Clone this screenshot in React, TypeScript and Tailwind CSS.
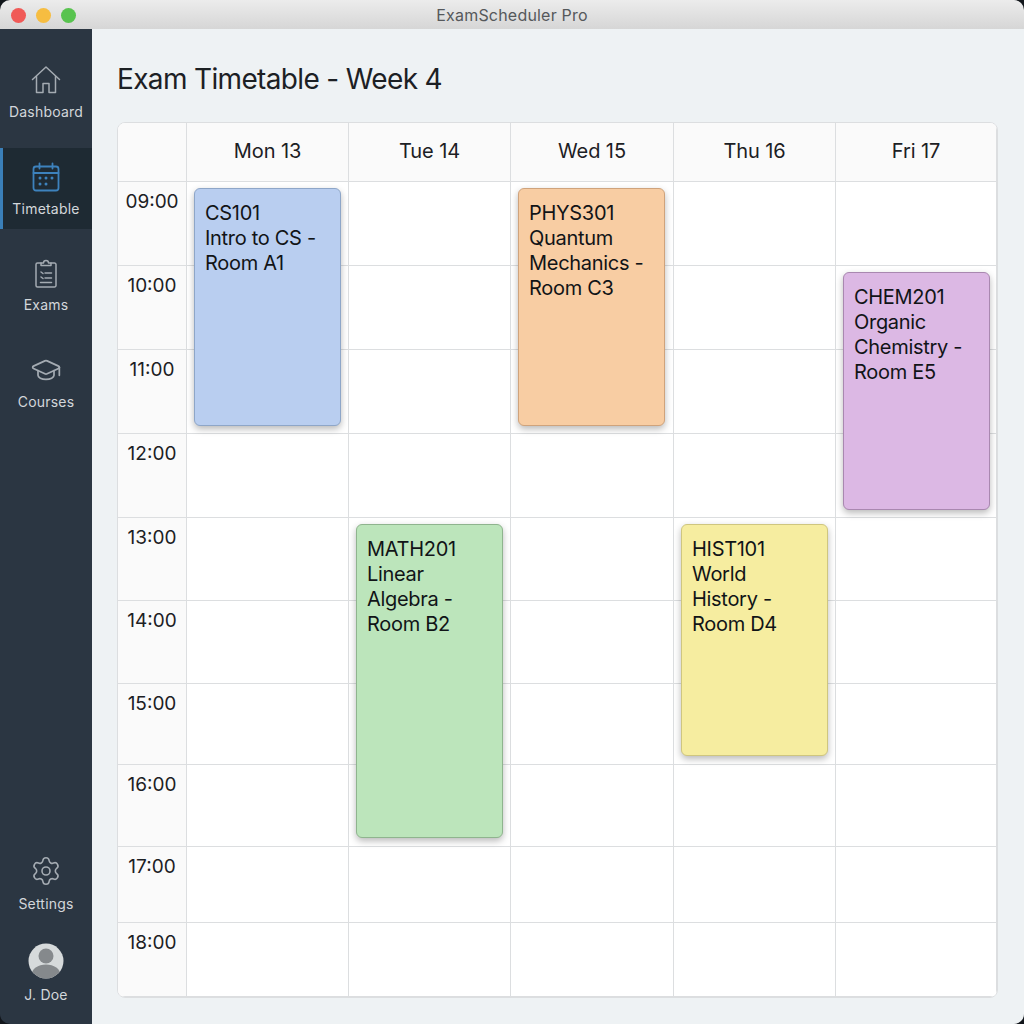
import React from 'react';
import { GraduationCap, Settings } from 'lucide-react';

const days = ['Mon 13', 'Tue 14', 'Wed 15', 'Thu 16', 'Fri 17'];
const times = ['09:00', '10:00', '11:00', '12:00', '13:00', '14:00', '15:00', '16:00', '17:00', '18:00'];

const events = [
  { lines: ['CS101', 'Intro to CS -', 'Room A1'], pos: 'col-start-2 row-start-2 row-span-3 mb-[8px]', color: 'bg-[#b9cef0] border-[#8ea6c8]' },
  { lines: ['PHYS301', 'Quantum', 'Mechanics -', 'Room C3'], pos: 'col-start-4 row-start-2 row-span-3 mb-[8px]', color: 'bg-[#f8cda3] border-[#cfa37c]' },
  { lines: ['CHEM201', 'Organic', 'Chemistry -', 'Room E5'], pos: 'col-start-6 row-start-3 row-span-3 mb-[8px]', color: 'bg-[#dcb8e4] border-[#a988b0]' },
  { lines: ['MATH201', 'Linear', 'Algebra -', 'Room B2'], pos: 'col-start-3 row-start-6 row-span-4 mb-[9px]', color: 'bg-[#bce5bb] border-[#8fb48e]' },
  { lines: ['HIST101', 'World', 'History -', 'Room D4'], pos: 'col-start-5 row-start-6 row-span-3 mb-[9px]', color: 'bg-[#f6eda0] border-[#cfc67f]' },
];

function HouseIcon() {
  return (
    <svg width="30" height="30" viewBox="0 0 30 30" fill="none" stroke="#a4abb2" strokeWidth="1.5" strokeLinecap="round" strokeLinejoin="round">
      <path d="M1.5 14.5 15 2l13.5 12.5" />
      <path d="M5.5 11.5V27.5h6.5V18.5h6V27.5h6.5V11.5" />
    </svg>
  );
}

function CalendarIcon() {
  return (
    <svg width="30" height="30" viewBox="0 0 30 30" fill="none" stroke="#3d82bd" strokeWidth="1.8" strokeLinecap="round">
      <rect x="2.5" y="4.5" width="25" height="24" rx="2.5" />
      <path d="M2.5 11h25M8.5 1.5v5M21.5 1.5v5" />
      <g fill="#3d82bd" stroke="none">
        <circle cx="9" cy="16" r="1.5" />
        <circle cx="15" cy="16" r="1.5" />
        <circle cx="21" cy="16" r="1.5" />
        <circle cx="9" cy="22" r="1.5" />
        <circle cx="15" cy="22" r="1.5" />
      </g>
    </svg>
  );
}

function ExamsIcon() {
  return (
    <svg width="30" height="30" viewBox="0 0 30 30" fill="none" stroke="#a4abb2" strokeWidth="1.5" strokeLinecap="round" strokeLinejoin="round">
      <path d="M10 5H6.5a1.5 1.5 0 0 0-1.5 1.5v21a1.5 1.5 0 0 0 1.5 1.5h17a1.5 1.5 0 0 0 1.5-1.5v-21A1.5 1.5 0 0 0 23.5 5H20" />
      <path d="M10 7.5V5h2.5a2.5 2.5 0 0 1 5 0H20v2.5z" />
      <path d="M10 14l2 1.5M14 15h6.5M10 19l2 1.5M14 20h6.5M9.5 24.5h11" />
    </svg>
  );
}

function Avatar() {
  return (
    <svg width="36" height="36" viewBox="0 0 36 36">
      <defs>
        <clipPath id="avatar-clip">
          <circle cx="18" cy="18" r="17.5" />
        </clipPath>
      </defs>
      <g clipPath="url(#avatar-clip)">
        <rect width="36" height="36" fill="#d6dadb" />
        <circle cx="18" cy="13" r="7.5" fill="#85898c" />
        <ellipse cx="18" cy="32" rx="14.5" ry="10.5" fill="#85898c" />
      </g>
    </svg>
  );
}

function NavItem({ icon, label, active }: { icon: React.ReactNode; label: string; active?: boolean }) {
  return (
    <div
      className={
        active
          ? 'h-[81px] flex flex-col items-center pt-[13px] gap-[6px] border-l-[3px] border-[#3a7fb8] bg-[#1e2a33] pr-[3px]'
          : 'h-[81px] flex flex-col items-center pt-[13px] gap-[6px]'
      }
    >
      <div className="h-[32px] flex items-center justify-center">{icon}</div>
      <span className="text-[14px] leading-[20px] tracking-[0.2px] text-[#d3d7db]">{label}</span>
    </div>
  );
}

export default function App() {
  return (
    <div className="w-[1024px] h-[1024px] bg-[#12161b] overflow-hidden font-['Inter',sans-serif]">
      <div className="h-full flex flex-col rounded-[10px] overflow-hidden">
        {/* Title bar */}
        <div className="relative h-[29px] shrink-0 flex items-center justify-center bg-gradient-to-b from-[#ececec] to-[#d6d6d6]">
          <div className="absolute left-[11px] top-[8px] flex gap-[10px]">
            <span className="w-[15px] h-[15px] rounded-full bg-[#f05a57]" />
            <span className="w-[15px] h-[15px] rounded-full bg-[#f6bd41]" />
            <span className="w-[15px] h-[15px] rounded-full bg-[#58c34f]" />
          </div>
          <span className="text-[16px] text-[#55585b] tracking-[0.2px]">ExamScheduler Pro</span>
        </div>

        <div className="flex-1 flex min-h-0">
          {/* Sidebar */}
          <aside className="w-[92px] shrink-0 bg-[#2b3642] flex flex-col">
            <div className="pt-[22px] flex flex-col gap-[15.5px]">
              <NavItem icon={<HouseIcon />} label="Dashboard" />
              <NavItem icon={<CalendarIcon />} label="Timetable" active />
              <NavItem icon={<ExamsIcon />} label="Exams" />
              <NavItem icon={<GraduationCap size={32} strokeWidth={1.3} color="#a4abb2" />} label="Courses" />
            </div>
            <div className="mt-auto pb-[19px] flex flex-col items-center">
              <Settings size={32} strokeWidth={1.2} color="#a4abb2" />
              <span className="mt-[7px] text-[14px] leading-[20px] tracking-[0.2px] text-[#d3d7db]">Settings</span>
              <div className="mt-[29px]">
                <Avatar />
              </div>
              <span className="mt-[6px] text-[14px] leading-[20px] tracking-[0.2px] text-[#d3d7db]">J. Doe</span>
            </div>
          </aside>

          {/* Main */}
          <main className="flex-1 bg-[#eef2f4] pl-[25px] pr-[26px] pt-[30px] pb-[26px] flex flex-col min-w-0">
            <h1 className="text-[28px] leading-[40px] tracking-[-0.65px] text-[#1c2024] font-normal">Exam Timetable - Week 4</h1>
            <div className="mt-[23px] flex-1 rounded-[8px] border border-[#dcdee0] overflow-hidden bg-white grid grid-cols-[69px_162px_162px_163px_162px_1fr] grid-rows-[59px_84px_84px_84px_84px_83px_82.5px_81.5px_82px_76px_1fr]">
              <div className="col-start-1 row-start-1 bg-[#fafafa] border-r border-b border-[#dcdee0]" />
              {days.map((day, d) => (
                <div
                  key={day}
                  className="row-start-1 bg-[#fafafa] border-b border-r border-[#dcdee0] last:border-r-0 flex items-center justify-center pb-[3px] text-[20px] tracking-[-0.1px] text-[#1c2024]"
                  style={{ gridColumnStart: d + 2 }}
                >
                  {day}
                </div>
              ))}
              {times.map((time, r) => (
                <React.Fragment key={time}>
                  <div
                    className="col-start-1 bg-[#fafafa] border-r border-b border-[#dcdee0] last:border-b-0 pt-[7px] text-center text-[19px] leading-[25px] text-[#1c2024]"
                    style={{ gridRowStart: r + 2 }}
                  >
                    {time}
                  </div>
                  {days.map((day, d) => (
                    <div
                      key={day}
                      className="bg-white border-b border-r border-[#dcdee0] last:border-r-0"
                      style={{ gridRowStart: r + 2, gridColumnStart: d + 2 }}
                    />
                  ))}
                </React.Fragment>
              ))}
              {events.map(ev => (
                <div
                  key={ev.lines[0]}
                  className={`${ev.pos} ${ev.color} z-10 mt-[6px] ml-[7px] w-[147px] rounded-[6px] border pl-[10px] pt-[12px] text-[20px] leading-[25px] tracking-[-0.3px] text-[#111417] shadow-[0_3px_7px_rgba(0,0,0,0.28)]`}
                >
                  {ev.lines.map(line => (
                    <div key={line}>{line}</div>
                  ))}
                </div>
              ))}
            </div>
          </main>
        </div>
      </div>
    </div>
  );
}
